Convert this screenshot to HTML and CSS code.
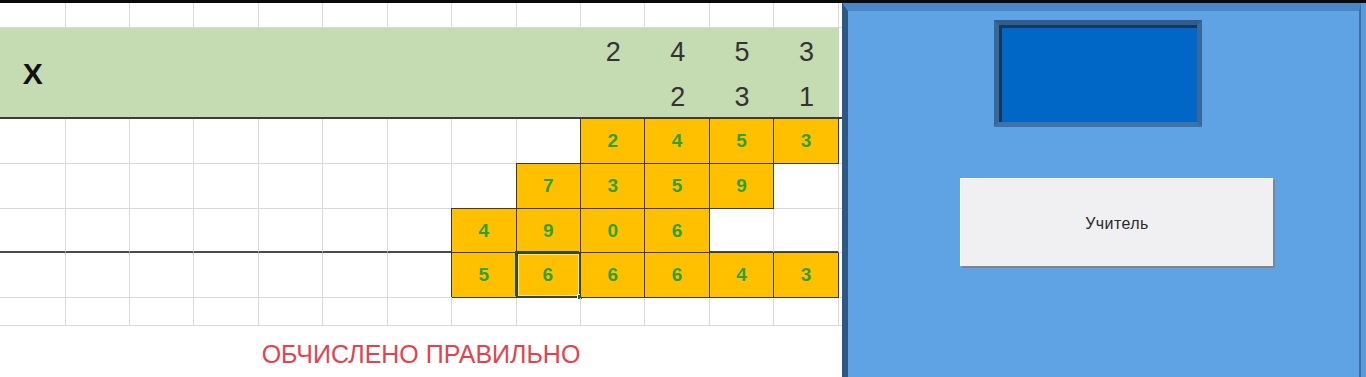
FILE: index.html
```html
<!DOCTYPE html>
<html>
<head>
<meta charset="utf-8">
<link rel="stylesheet" href="styles.css">
</head>
<body>
<div class="topbar"></div>
<div class="page">
  <div class="sheet">
    <div class="row r0">
      <div class="c"></div><div class="c"></div><div class="c"></div><div class="c"></div><div class="c"></div><div class="c"></div><div class="c"></div><div class="c"></div><div class="c"></div><div class="c"></div><div class="c"></div><div class="c"></div><div class="c"></div><div class="c f"></div>
    </div>
    <div class="hdr">
      <div class="hx">X</div>
      <div class="hf"></div>
      <div class="hd h1 k10">2</div><div class="hd h1 k11">4</div><div class="hd h1 k12">5</div><div class="hd h1 k13">3</div>
      <div class="hd h2 k11">2</div><div class="hd h2 k12">3</div><div class="hd h2 k13">1</div>
    </div>
    <div class="row r45">
      <div class="c"></div><div class="c"></div><div class="c"></div><div class="c"></div><div class="c"></div><div class="c"></div><div class="c"></div><div class="c"></div><div class="c"></div>
      <div class="c o">2</div><div class="c o">4</div><div class="c o">5</div><div class="c o">3</div><div class="c f"></div>
    </div>
    <div class="row r45">
      <div class="c"></div><div class="c"></div><div class="c"></div><div class="c"></div><div class="c"></div><div class="c"></div><div class="c"></div><div class="c"></div>
      <div class="c o">7</div><div class="c o">3</div><div class="c o">5</div><div class="c o">9</div><div class="c"></div><div class="c f"></div>
    </div>
    <div class="row r44 thick">
      <div class="c"></div><div class="c"></div><div class="c"></div><div class="c"></div><div class="c"></div><div class="c"></div><div class="c"></div>
      <div class="c o">4</div><div class="c o">9</div><div class="c o">0</div><div class="c o">6</div><div class="c"></div><div class="c"></div><div class="c f"></div>
    </div>
    <div class="row r45">
      <div class="c"></div><div class="c"></div><div class="c"></div><div class="c"></div><div class="c"></div><div class="c"></div><div class="c"></div>
      <div class="c o">5</div><div class="c o sel">6</div><div class="c o">6</div><div class="c o">6</div><div class="c o">4</div><div class="c o">3</div><div class="c f"></div>
    </div>
    <div class="row r28">
      <div class="c"></div><div class="c"></div><div class="c"></div><div class="c"></div><div class="c"></div><div class="c"></div><div class="c"></div><div class="c"></div><div class="c"></div><div class="c"></div><div class="c"></div><div class="c"></div><div class="c"></div><div class="c f"></div>
    </div>
    <div class="msg">ОБЧИСЛЕНО ПРАВИЛЬНО</div>
  </div>
  <div class="panel">
    <div class="panel-inner">
      <div class="screen"></div>
      <div class="btn">Учитель</div>
    </div>
  </div>
</div>
</body>
</html>
```
FILE: styles.css
```css
html, body {
  margin: 0;
  padding: 0;
  background: #ffffff;
  overflow: hidden;
}
body {
  width: 1366px;
  height: 377px;
  font-family: "Liberation Sans", Arial, sans-serif;
}
.topbar {
  height: 3px;
  background: #0a0a0a;
}
.page {
  display: flex;
  height: 374px;
}
.sheet {
  width: 842px;
  flex: none;
  display: flex;
  flex-direction: column;
}
.row {
  display: flex;
  flex: none;
}
.r0 { height: 25px; }
.r45 { height: 45px; }
.r44 { height: 44px; }
.r28 { height: 28px; }
.c {
  box-sizing: border-box;
  flex: none;
  width: 64.45px;
  height: 100%;
  border-right: 1px solid #dadada;
  border-bottom: 1px solid #dadada;
  display: flex;
  align-items: center;
  justify-content: center;
  font-weight: bold;
  font-size: 19px;
  color: #33a033;
  position: relative;
}
.c:first-child { width: 65.5px; }
.c.f {
  width: 3px;
  border-right: none;
}
.thick .c {
  border-bottom: 2px solid #4a4a4a;
}
.thick .c.f {
  border-bottom: 1px solid #dadada;
}
.o {
  background: #ffc000;
  border-right: 1px solid #3b3a2a;
  border-bottom: 1px solid #3b3a2a;
  box-shadow: -1px -1px 0 0 #3b3a2a;
}
.thick .o {
  border-bottom: 1px solid #3b3a2a;
}
.sel {
  box-shadow: -2px -2px 0 0 #2c4a2c, inset 1px 1px 0 0 #2c4a2c, inset -1px -1px 0 0 #ffe27a, inset 2px 2px 0 0 #ffe27a;
  border-right: 2px solid #2c4a2c;
  border-bottom: 2px solid #2c4a2c;
}
.sel::after {
  content: "";
  position: absolute;
  right: -4px;
  bottom: -4px;
  width: 6px;
  height: 6px;
  background: #1f6b45;
  border: 1px solid #ffffff;
  box-sizing: border-box;
}
.hdr {
  display: grid;
  grid-template-columns: 65.5px repeat(12, 64.45px) 3px;
  grid-template-rows: 45px 44px;
  background: #c5dbb1;
  border-bottom: 2px solid #3c3c3c;
  flex: none;
}
.hx {
  grid-row: 1 / 3;
  grid-column: 1;
  display: flex;
  align-items: center;
  justify-content: center;
  font-weight: bold;
  font-size: 30px;
  color: #111111;
  padding-top: 3px;
}
.hf {
  grid-row: 1 / 3;
  grid-column: 14;
  background: #ffffff;
}
.hd {
  display: flex;
  align-items: center;
  justify-content: center;
  font-size: 27px;
  color: #333333;
}
.h1 { grid-row: 1; padding-top: 3px; }
.h2 { grid-row: 2; padding-top: 5px; }
.k10 { grid-column: 10; }
.k11 { grid-column: 11; }
.k12 { grid-column: 12; }
.k13 { grid-column: 13; }
.msg {
  flex: 1;
  text-align: center;
  padding-top: 14px;
  font-size: 25px;
  line-height: 28px;
  color: #e4434e;
}
.panel {
  flex: 1;
  display: flex;
  background: #5a9ad8;
  padding-right: 5px;
}
.panel-inner {
  flex: 1;
  background: #5fa3e4;
  border-left: 6px solid #2c5886;
  border-top: 8px solid #4a86c6;
  border-right: 2px solid #3d6fa6;
  display: flex;
  flex-direction: column;
  align-items: flex-start;
}
.screen {
  box-sizing: border-box;
  margin-left: 146px;
  margin-top: 9px;
  width: 208px;
  height: 107px;
  background: #0067c6;
  border: 5px solid #36689c;
  border-top-color: #2f5d8d;
  border-bottom-color: #3f72a6;
  box-shadow: inset 3px 3px 0 0 #12395f;
}
.btn {
  box-sizing: border-box;
  margin-left: 112px;
  margin-top: 51px;
  width: 313px;
  height: 88px;
  background: #f0eff1;
  border-top: 1px solid #ffffff;
  border-left: 1px solid #ffffff;
  box-shadow: 2px 2px 0 0 #7d8590;
  display: flex;
  align-items: center;
  justify-content: center;
  padding-top: 3px;
  font-size: 16px;
  letter-spacing: 0.4px;
  color: #2a2a2a;
}
```
